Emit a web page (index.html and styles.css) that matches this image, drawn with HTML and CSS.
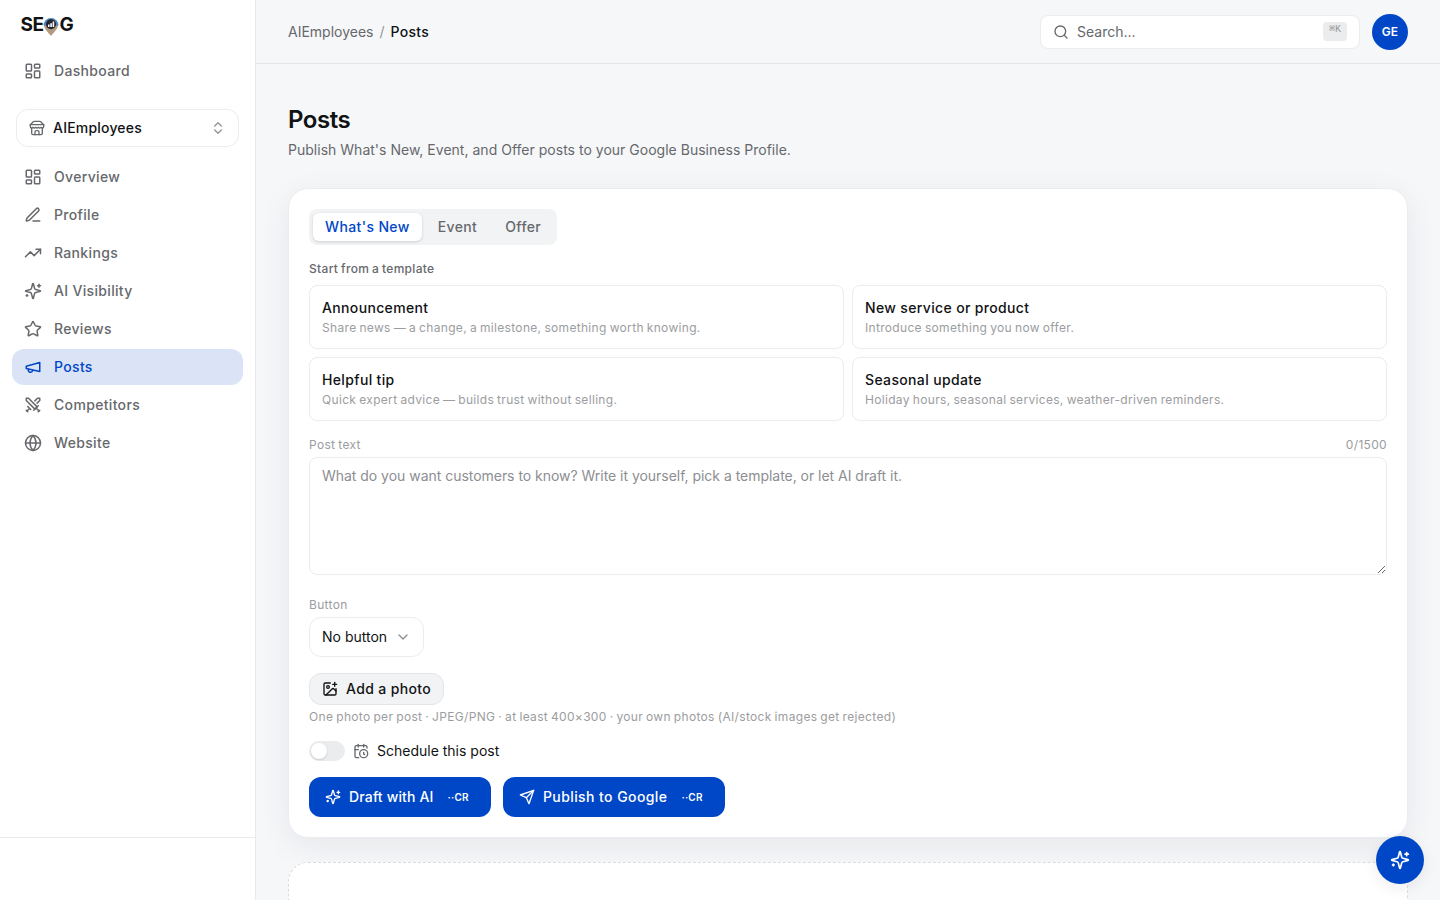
FILE: index.html
```html
<!DOCTYPE html>
<html lang="en">
<head>
	<meta charset="utf-8">
	<title>Posts - SEOG</title>
	<link rel="stylesheet" href="styles.css">
</head>
<body>
	<!-- icons -->
	<svg class="sprite">
		<symbol id="dashboard" viewBox="0 0 24 24"><rect width="7" height="9" x="3" y="3" rx="1"/><rect width="7" height="5" x="14" y="3" rx="1"/><rect width="7" height="9" x="14" y="12" rx="1"/><rect width="7" height="5" x="3" y="16" rx="1"/></symbol>
		<symbol id="store" viewBox="0 0 24 24"><path d="m2 7 4.41-4.41A2 2 0 0 1 7.83 2h8.34a2 2 0 0 1 1.42.59L22 7"/><path d="M4 12v8a2 2 0 0 0 2 2h12a2 2 0 0 0 2-2v-8"/><path d="M15 22v-4a2 2 0 0 0-2-2h-2a2 2 0 0 0-2 2v4"/><path d="M2 7h20"/><path d="M22 7v3a2 2 0 0 1-2 2a2.7 2.7 0 0 1-1.59-.63.7.7 0 0 0-.82 0A2.7 2.7 0 0 1 16 12a2.7 2.7 0 0 1-1.59-.63.7.7 0 0 0-.82 0A2.7 2.7 0 0 1 12 12a2.7 2.7 0 0 1-1.59-.63.7.7 0 0 0-.82 0A2.7 2.7 0 0 1 8 12a2.7 2.7 0 0 1-1.59-.63.7.7 0 0 0-.82 0A2.7 2.7 0 0 1 4 12a2 2 0 0 1-2-2V7"/></symbol>
		<symbol id="updown" viewBox="0 0 24 24"><path d="m7 15 5 5 5-5"/><path d="m7 9 5-5 5 5"/></symbol>
		<symbol id="pen" viewBox="0 0 24 24"><path d="M12 20h9"/><path d="M16.376 3.622a1 1 0 0 1 3.002 3.002L7.368 18.635a2 2 0 0 1-.855.506l-2.872.838a.5.5 0 0 1-.62-.62l.838-2.872a2 2 0 0 1 .506-.854z"/></symbol>
		<symbol id="trending" viewBox="0 0 24 24"><path d="M22 7l-8.5 8.5-5-5L2 17"/><path d="M16 7h6v6"/></symbol>
		<symbol id="sparkles" viewBox="0 0 24 24"><path d="M9.937 15.5A2 2 0 0 0 8.5 14.063l-6.135-1.582a.5.5 0 0 1 0-.962L8.5 9.936A2 2 0 0 0 9.937 8.5l1.582-6.135a.5.5 0 0 1 .963 0L14.063 8.5A2 2 0 0 0 15.5 9.937l6.135 1.581a.5.5 0 0 1 0 .964L15.5 14.063a2 2 0 0 0-1.437 1.437l-1.582 6.135a.5.5 0 0 1-.963 0z"/><path d="M20 3v4"/><path d="M22 5h-4"/><path d="M4 17v2"/><path d="M5 18H3"/></symbol>
		<symbol id="star" viewBox="0 0 24 24"><path d="M11.525 2.295a.53.53 0 0 1 .95 0l2.31 4.679a2.123 2.123 0 0 0 1.595 1.16l5.166.756a.53.53 0 0 1 .294.904l-3.736 3.638a2.123 2.123 0 0 0-.611 1.878l.882 5.14a.53.53 0 0 1-.771.56l-4.618-2.428a2.122 2.122 0 0 0-1.973 0L6.396 21.01a.53.53 0 0 1-.77-.56l.881-5.139a2.122 2.122 0 0 0-.611-1.879L2.16 9.795a.53.53 0 0 1 .294-.906l5.165-.755a2.122 2.122 0 0 0 1.597-1.16z"/></symbol>
		<symbol id="megaphone" viewBox="0 0 24 24"><path d="m3 11 18-5v12L3 14v-3z"/><path d="M11.6 16.8a3 3 0 1 1-5.8-1.6"/></symbol>
		<symbol id="swords" viewBox="0 0 24 24"><path d="M14.5 17.5 3 6V3h3l11.5 11.5"/><path d="m13 19 6-6"/><path d="m16 16 4 4"/><path d="m19 21 2-2"/><path d="M14.5 6.5 18 3h3v3l-3.5 3.5"/><path d="m5 14 4 4"/><path d="m7 17-3 3"/><path d="m3 19 2 2"/></symbol>
		<symbol id="globe" viewBox="0 0 24 24"><circle cx="12" cy="12" r="10"/><path d="M12 2a14.5 14.5 0 0 0 0 20 14.5 14.5 0 0 0 0-20"/><path d="M2 12h20"/></symbol>
		<symbol id="search" viewBox="0 0 24 24"><circle cx="11" cy="11" r="8"/><path d="m21 21-4.3-4.3"/></symbol>
		<symbol id="chevron" viewBox="0 0 24 24"><path d="m6 9 6 6 6-6"/></symbol>
		<symbol id="image" viewBox="0 0 24 24"><path d="M16 5h6"/><path d="M19 2v6"/><path d="M21 11.5V19a2 2 0 0 1-2 2H5a2 2 0 0 1-2-2V5a2 2 0 0 1 2-2h7.5"/><path d="m21 15-3.086-3.086a2 2 0 0 0-2.828 0L6 21"/><circle cx="9" cy="9" r="2"/></symbol>
		<symbol id="calendar" viewBox="0 0 24 24"><path d="M21 7.5V6a2 2 0 0 0-2-2H5a2 2 0 0 0-2 2v14a2 2 0 0 0 2 2h3.5"/><path d="M16 2v4"/><path d="M8 2v4"/><path d="M3 10h5"/><path d="M17.5 17.5 16 16.3V14"/><circle cx="16" cy="16" r="6"/></symbol>
		<symbol id="send" viewBox="0 0 24 24"><path d="m22 2-7 20-4-9-9-4Z"/><path d="M22 2 11 13"/></symbol>
	</svg>

	<div class="app">
		<aside class="sidebar">
			<div class="logo">
				<span>SE</span>
				<svg class="pin" viewBox="0 0 16 20"><path d="M1 9h14c0 4-4 7-7 11C5 16 1 13 1 9z" fill="#b39a82"/><path d="M0.5 9.5a7.5 7.5 0 0 1 15 0z" fill="#5383b8"/><circle cx="8" cy="8.2" r="5" fill="#22242c"/><path d="M5 8.5h1.6V11H5zM7.3 7.2h1.6V11H7.3zM9.6 5.5h1.6V11H9.6z" fill="#fff"/></svg>
				<span>G</span>
			</div>
			<nav class="nav">
				<a class="nav-item"><svg class="icon"><use href="#dashboard"/></svg>Dashboard</a>
			</nav>
			<button class="switcher">
				<svg class="icon"><use href="#store"/></svg>
				<span>AIEmployees</span>
				<svg class="icon updown"><use href="#updown"/></svg>
			</button>
			<nav class="nav">
				<a class="nav-item"><svg class="icon"><use href="#dashboard"/></svg>Overview</a>
				<a class="nav-item"><svg class="icon"><use href="#pen"/></svg>Profile</a>
				<a class="nav-item"><svg class="icon"><use href="#trending"/></svg>Rankings</a>
				<a class="nav-item"><svg class="icon"><use href="#sparkles"/></svg>AI Visibility</a>
				<a class="nav-item"><svg class="icon"><use href="#star"/></svg>Reviews</a>
				<a class="nav-item active"><svg class="icon"><use href="#megaphone"/></svg>Posts</a>
				<a class="nav-item"><svg class="icon"><use href="#swords"/></svg>Competitors</a>
				<a class="nav-item"><svg class="icon"><use href="#globe"/></svg>Website</a>
			</nav>
			<div class="sidebar-footer"></div>
		</aside>

		<div class="page">
			<header class="header">
				<div class="breadcrumb"><span>AIEmployees</span><span class="slash">/</span><b>Posts</b></div>
				<button class="search">
					<svg class="icon"><use href="#search"/></svg>
					<span>Search...</span>
					<kbd>⌘K</kbd>
				</button>
				<div class="avatar">GE</div>
			</header>

			<main class="main">
				<h1>Posts</h1>
				<p class="subtitle">Publish What's New, Event, and Offer posts to your Google Business Profile.</p>

				<section class="card">
					<div class="tabs">
						<button class="tab selected">What's New</button>
						<button class="tab">Event</button>
						<button class="tab">Offer</button>
					</div>

					<div class="templates-label">Start from a template</div>
					<div class="templates">
						<button class="template"><b>Announcement</b><span>Share news — a change, a milestone, something worth knowing.</span></button>
						<button class="template"><b>New service or product</b><span>Introduce something you now offer.</span></button>
						<button class="template"><b>Helpful tip</b><span>Quick expert advice — builds trust without selling.</span></button>
						<button class="template"><b>Seasonal update</b><span>Holiday hours, seasonal services, weather-driven reminders.</span></button>
					</div>

					<div class="field-label"><span>Post text</span><span>0/1500</span></div>
					<textarea placeholder="What do you want customers to know? Write it yourself, pick a template, or let AI draft it."></textarea>

					<div class="field-label"><span>Button</span></div>
					<button class="select">No button<svg class="icon"><use href="#chevron"/></svg></button>

					<button class="photo"><svg class="icon"><use href="#image"/></svg>Add a photo</button>
					<div class="hint">One photo per post · JPEG/PNG · at least 400×300 · your own photos (AI/stock images get rejected)</div>

					<label class="schedule">
						<span class="toggle"></span>
						<svg class="icon"><use href="#calendar"/></svg>
						Schedule this post
					</label>

					<div class="actions">
						<button class="primary draft"><svg class="icon"><use href="#sparkles"/></svg>Draft with AI<span class="credits">··CR</span></button>
						<button class="primary"><svg class="icon"><use href="#send"/></svg>Publish to Google<span class="credits">··CR</span></button>
					</div>
				</section>

				<section class="empty"></section>
			</main>
		</div>
	</div>

	<button class="assistant"><svg class="icon"><use href="#sparkles"/></svg></button>
</body>
</html>
```
FILE: styles.css
```css
* {
	box-sizing: border-box;
}

body {
	margin: 0;
	font-family: Inter, sans-serif;
	font-size: 14px;
	line-height: 20px;
	color: #111214;
	background-color: #f6f7f9;
}

button, textarea {
	font: inherit;
	letter-spacing: inherit;
	color: inherit;
	margin: 0;
}

button {
	border: none;
	cursor: pointer;
}

.sprite {
	display: none;
}

.icon {
	width: 16px;
	height: 16px;
	flex-shrink: 0;
	fill: none;
	stroke: currentColor;
	stroke-width: 2;
	stroke-linecap: round;
	stroke-linejoin: round;
}

.app {
	display: flex;
	height: 100vh;
	overflow: hidden;
}

/* sidebar */
.sidebar {
	display: flex;
	flex-direction: column;
	width: 256px;
	flex-shrink: 0;
	background-color: #fff;
	border-right: 1px solid #e9eaec;
}

.logo {
	display: flex;
	align-items: center;
	height: 53px;
	padding: 0 0 3px 20.5px;
	font-size: 19px;
	font-weight: 700;
	letter-spacing: -0.5px;
}

.pin {
	width: 16px;
	height: 20px;
	margin: 2px 0 0 0;
}

.nav {
	display: flex;
	flex-direction: column;
	gap: 2px;
	padding: 0 12px;
}

.nav-item {
	display: flex;
	align-items: center;
	gap: 12px;
	height: 36px;
	padding: 0 12px;
	border-radius: 12px;
	font-weight: 500;
	letter-spacing: 0.33px;
	color: #66686c;
}

.nav-item .icon {
	width: 18px;
	height: 18px;
}

.nav-item.active {
	color: #0047c7;
	background-color: #dbe4f7;
}

.switcher {
	display: flex;
	align-items: center;
	gap: 8px;
	height: 38px;
	margin: 20px 16px 12px;
	padding: 0 12px;
	border: 1px solid #ebecee;
	border-radius: 12px;
	background-color: #fff;
	font-weight: 500;
	letter-spacing: 0.2px;
	text-align: left;
}

.switcher span {
	flex: 1;
}

.switcher .icon {
	color: #66686c;
}

.switcher .updown {
	color: #929498;
}

.sidebar-footer {
	height: 63px;
	margin-top: auto;
	border-top: 1px solid #e9eaec;
}

/* top bar */
.page {
	flex: 1;
	min-width: 0;
}

.header {
	display: flex;
	align-items: center;
	height: 64px;
	padding: 0 32px;
	border-bottom: 1px solid #e3e5e8;
}

.breadcrumb {
	display: flex;
	gap: 6px;
	margin-right: auto;
	color: #66686c;
}

.breadcrumb b {
	font-weight: 500;
	letter-spacing: 0.3px;
	color: #111214;
}

.slash {
	color: #929498;
}

.search {
	display: flex;
	align-items: center;
	gap: 8px;
	width: 320px;
	height: 34px;
	margin-right: 12px;
	padding: 0 12px;
	border: 1px solid #ebecee;
	border-radius: 8px;
	background-color: #fff;
	color: #66686c;
	text-align: left;
}

.search span {
	flex: 1;
}

.search kbd {
	width: 24px;
	height: 19px;
	border-radius: 4px;
	background-color: #ebecee;
	color: #96989b;
	font-family: "Liberation Mono", "DejaVu Sans Mono", monospace;
	font-size: 10px;
	line-height: 16px;
	text-align: center;
}

.avatar {
	width: 36px;
	height: 36px;
	border-radius: 50%;
	background-color: #0047c7;
	color: #fff;
	font-size: 12px;
	font-weight: 600;
	line-height: 36px;
	text-align: center;
}

/* content */
.main {
	padding: 40px 32px 0;
}

h1 {
	margin: 0 0 4px;
	font-size: 24px;
	font-weight: 600;
	line-height: 32px;
	letter-spacing: -0.45px;
}

.subtitle {
	margin: 0 0 28px;
	letter-spacing: 0.015px;
	color: #66686c;
}

.card {
	padding: 20px;
	border: 1px solid #ebecee;
	border-radius: 20px;
	background-color: #fff;
	box-shadow: 0 8px 32px rgba(17, 24, 39, 0.07);
}

.tabs {
	display: flex;
	gap: 4px;
	width: max-content;
	padding: 4px;
	border-radius: 8px;
	background-color: #f2f3f5;
}

.tab {
	height: 28px;
	padding: 0 12px;
	border-radius: 6px;
	background: none;
	font-weight: 500;
	letter-spacing: 0.37px;
	color: #66686c;
}

.tab.selected {
	background-color: #fff;
	color: #0047c7;
	box-shadow: 0 1px 3px rgba(0, 0, 0, 0.15);
}

.templates-label,
.template span,
.field-label,
.hint {
	font-size: 12px;
	line-height: 16px;
	letter-spacing: 0.32px;
	word-spacing: -0.7px;
	color: #9b9da0;
}

.templates-label {
	margin: 16px 0 8px;
	font-weight: 500;
	color: #66686c;
}

.templates {
	display: grid;
	grid-template-columns: 1fr 1fr;
	gap: 8px;
}

.template {
	display: flex;
	flex-direction: column;
	justify-content: center;
	gap: 2px;
	height: 64px;
	padding: 0 12px;
	border: 1px solid #ebecee;
	border-radius: 8px;
	background-color: #fff;
	text-align: left;
}

.template b {
	font-weight: 500;
	letter-spacing: 0.35px;
}

.field-label {
	display: flex;
	justify-content: space-between;
	margin: 16px 0 4px;
}

textarea {
	display: block;
	width: 100%;
	height: 118px;
	margin-bottom: 22px;
	padding: 8px 12px;
	border: 1px solid #ebecee;
	border-radius: 8px;
	background-color: #fff;
	resize: vertical;
}

textarea::placeholder {
	color: #8c8e92;
	letter-spacing: -0.03px;
}

.select {
	display: flex;
	align-items: center;
	gap: 8px;
	height: 40px;
	padding: 0 12px;
	border: 1px solid #ebecee;
	border-radius: 12px;
	background-color: #fff;
}

.select .icon {
	color: #8c8e92;
}

.photo {
	display: flex;
	align-items: center;
	gap: 8px;
	height: 32px;
	margin: 16px 0 4px;
	padding: 0 12px;
	border: 1px solid #e3e5e8;
	border-radius: 12px;
	background-color: #f2f3f5;
	font-weight: 500;
	letter-spacing: 0.36px;
}

.schedule {
	display: flex;
	align-items: center;
	gap: 8px;
	margin: 16px 0;
}

.schedule .icon {
	color: #66686c;
}

.toggle {
	width: 36px;
	height: 20px;
	padding: 2px;
	border-radius: 10px;
	background-color: #ebecee;
}

.toggle::before {
	content: "";
	display: block;
	width: 16px;
	height: 16px;
	border-radius: 50%;
	background-color: #fff;
	box-shadow: 0 1px 2px rgba(0, 0, 0, 0.15);
}

.actions {
	display: flex;
	gap: 12px;
}

.primary {
	display: flex;
	align-items: center;
	gap: 8px;
	height: 40px;
	padding: 0 16px;
	border-radius: 12px;
	background-color: #0047c7;
	color: #fff;
	font-weight: 500;
	letter-spacing: 0.42px;
}

.primary.draft {
	letter-spacing: 0.16px;
}

.credits {
	padding: 0 6px;
	font-size: 10px;
	font-weight: 600;
	letter-spacing: 0.25px;
}

.empty {
	height: 200px;
	margin-top: 24px;
	border: 1px dashed #dcdcde;
	border-radius: 20px;
	background-color: #fff;
}

.assistant {
	position: fixed;
	right: 16px;
	bottom: 16px;
	display: flex;
	align-items: center;
	justify-content: center;
	width: 48px;
	height: 48px;
	border-radius: 50%;
	background-color: #0047c7;
	color: #fff;
	box-shadow: 0 4px 16px rgba(17, 24, 39, 0.08);
}

.assistant .icon {
	width: 20px;
	height: 20px;
}
```
